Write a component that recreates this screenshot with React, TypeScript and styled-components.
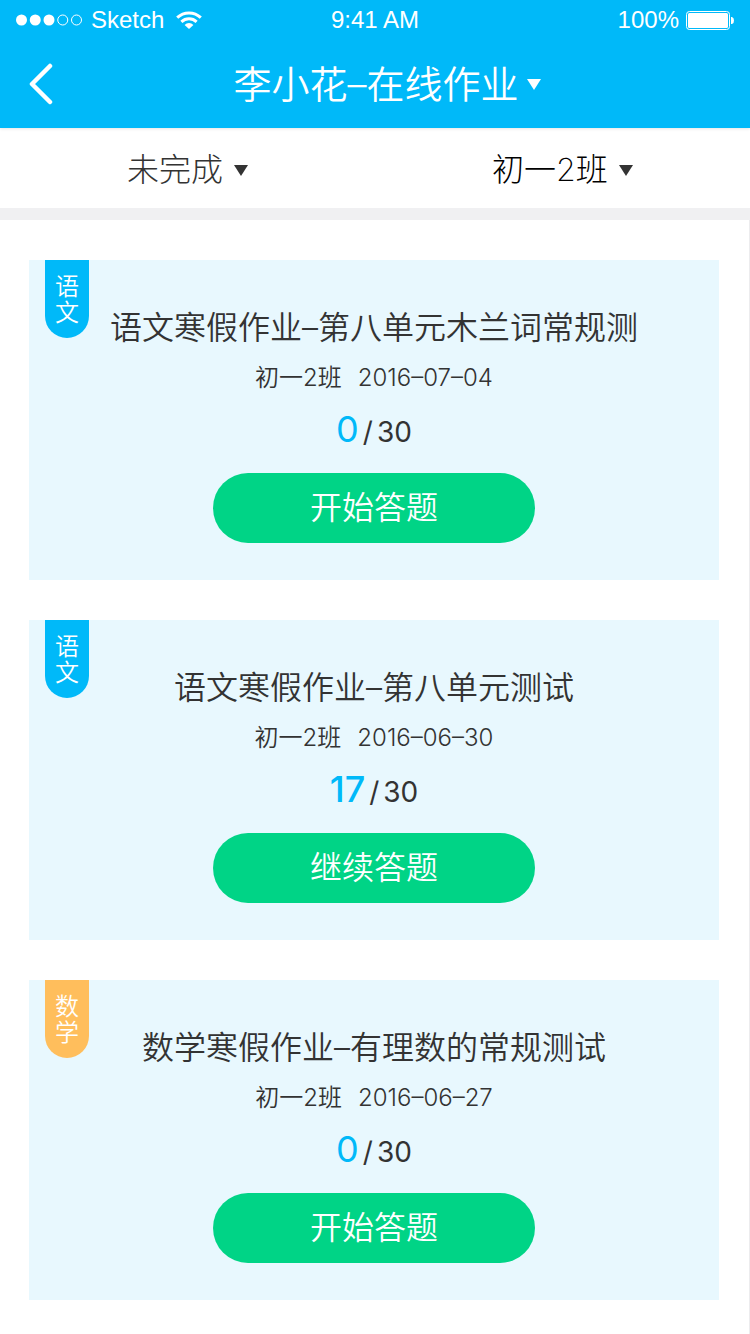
import React from "react";
import styled, { createGlobalStyle } from "styled-components";

const BLUE = "#00b9f9";
const INK = "#333333";
const CJK = `"Noto Sans CJK SC", sans-serif`;

const GlobalStyle = createGlobalStyle`
  *, *::before, *::after { box-sizing: border-box; }
  html, body, #root { min-height: 100vh; }
  body {
    margin: 0;
    background: #ffffff;
    color: ${INK};
    font-family: Inter, ${CJK};
    font-weight: 350;
  }
  #root { display: flex; flex-direction: column; }
  button, select { font: inherit; color: inherit; border: 0; padding: 0; margin: 0; background: none; cursor: pointer; }
  h1, h2, p { margin: 0; font-weight: inherit; }
`;

const TopBar = styled.header`
  background: ${BLUE};
  color: #ffffff;
  box-shadow: 0 1px 3px rgba(0, 0, 0, 0.1);
`;

const StatusBar = styled.div`
  display: grid;
  grid-template-columns: 1fr auto 1fr;
  align-items: center;
  height: 40px;
  padding: 0 16px;
  font: 400 24px/40px "Liberation Sans", Arial, sans-serif;
`;

const StatusGroup = styled.div<{ $end?: boolean }>`
  display: flex;
  align-items: center;
  justify-content: ${(p) => (p.$end ? "flex-end" : "flex-start")};
  gap: 7px;
`;

const Carrier = styled.span`
  padding-right: 5px;
`;

const NavBar = styled.div`
  display: grid;
  grid-template-columns: 1fr auto 1fr;
  align-items: center;
  height: 88px;
`;

const BackButton = styled.button`
  display: flex;
  align-items: center;
  justify-self: start;
  height: 88px;
  padding: 0 28px;
`;

const TitleButton = styled.button`
  display: flex;
  align-items: center;
  gap: 8px;
  padding-left: 24px;
  font-size: 38px;
  line-height: 56px;
`;

const FilterBar = styled.nav`
  display: flex;
  height: 92px;
  padding-top: 4px;
  border-bottom: 12px solid #f0f0f2;
`;

const Filter = styled.label<{ $color: string }>`
  flex: 1;
  display: flex;
  align-items: center;
  justify-content: center;
  gap: 11px;
  color: ${(p) => p.$color};
`;

const FilterSelect = styled.select`
  appearance: none;
  field-sizing: content;
  font-size: 32px;
  font-weight: 200;
  line-height: 48px;
`;

const HomeworkList = styled.main`
  flex: 1;
  display: flex;
  flex-direction: column;
  gap: 40px;
  padding: 40px 30px 34px 29px;
  border-right: 1px solid #ececee;
`;

const Card = styled.article`
  position: relative;
  display: flex;
  flex-direction: column;
  align-items: center;
  padding: 44px 16px 37px;
  background: #e8f8fe;
`;

const SubjectTag = styled.span<{ $color: string }>`
  position: absolute;
  top: 0;
  left: 16px;
  width: 44px;
  height: 78px;
  padding: 14px 10px;
  border-radius: 0 0 22px 22px;
  background: ${(p) => p.$color};
  color: #ffffff;
  font-size: 24px;
  line-height: 26px;
`;

const CardTitle = styled.h2`
  font-size: 32px;
  line-height: 48px;
  text-align: center;
`;

const Meta = styled.p`
  display: flex;
  gap: 16px;
  margin-top: 8px;
  font-size: 24px;
  line-height: 36px;
`;

const Progress = styled.p`
  display: flex;
  align-items: baseline;
  gap: 4px;
  margin: 12px 0 17px;
  font-size: 28px;
  font-weight: 400;
  line-height: 48px;
`;

const Done = styled.span<{ $started: boolean }>`
  color: ${BLUE};
  font-size: 36px;
  font-weight: ${(p) => (p.$started ? 500 : 400)};
  line-height: 40px;
`;

const AnswerButton = styled.button`
  width: 322px;
  max-width: 100%;
  height: 70px;
  border-radius: 35px;
  background: #00d486;
  color: #ffffff;
  font-size: 32px;
  line-height: 48px;
`;

const Caret = ({ color }: { color: string }) => (
  <svg width="14" height="11" viewBox="0 0 14 11" aria-hidden="true">
    <path d="M0 0H14L7 11Z" fill={color} />
  </svg>
);

const Signal = () => (
  <svg width="68" height="12" viewBox="0 0 68 12" aria-hidden="true">
    {[5.5, 19.25, 33].map((x) => (
      <circle key={x} cx={x} cy="6" r="5.5" fill="#fff" />
    ))}
    {[46.75, 60.5].map((x) => (
      <circle key={x} cx={x} cy="6" r="5" fill="none" stroke="#fff" />
    ))}
  </svg>
);

const Wifi = () => (
  <svg width="26" height="18" viewBox="0 0 26 18" aria-hidden="true">
    <g fill="none" stroke="#fff" strokeWidth="3">
      <path d="M1.2 6.7A17 17 0 0 1 24.8 6.7" />
      <path d="M5.4 10.9A11 11 0 0 1 20.6 10.9" />
    </g>
    <path d="M8.6 13.9A6.2 6.2 0 0 1 17.4 13.9L13 18Z" fill="#fff" />
  </svg>
);

const Battery = () => (
  <svg width="48" height="19" viewBox="0 0 48 19" aria-hidden="true">
    <rect x="0.5" y="0.5" width="43" height="18" rx="3" fill="none" stroke="#fff" />
    <rect x="2" y="2" width="40" height="15" rx="1.5" fill="#fff" />
    <path d="M45 6H46Q48 6.5 48 9.5T46 13H45Z" fill="#fff" />
  </svg>
);

const homework = [
  { subject: "语文", tag: BLUE, title: "语文寒假作业–第八单元木兰词常规测", date: "2016–07–04", done: 0, action: "开始答题" },
  { subject: "语文", tag: BLUE, title: "语文寒假作业–第八单元测试", date: "2016–06–30", done: 17, action: "继续答题" },
  { subject: "数学", tag: "#ffbe5c", title: "数学寒假作业–有理数的常规测试", date: "2016–06–27", done: 0, action: "开始答题" },
];

export default function App() {
  return (
    <>
      <GlobalStyle />
      <TopBar>
        <StatusBar>
          <StatusGroup>
            <Signal />
            <Carrier>Sketch</Carrier>
            <Wifi />
          </StatusGroup>
          <span>9:41 AM</span>
          <StatusGroup $end>
            <span>100%</span>
            <Battery />
          </StatusGroup>
        </StatusBar>
        <NavBar>
          <BackButton type="button" aria-label="返回">
            <svg width="26" height="42" viewBox="0 0 26 42" fill="none" aria-hidden="true">
              <path d="M22 3L4 21L22 39" stroke="#fff" strokeWidth="4.5" strokeLinecap="round" strokeLinejoin="round" />
            </svg>
          </BackButton>
          <h1>
            <TitleButton type="button" aria-haspopup="menu">
              李小花–在线作业
              <Caret color="#ffffff" />
            </TitleButton>
          </h1>
        </NavBar>
      </TopBar>
      <FilterBar>
        <Filter $color={INK}>
          <FilterSelect aria-label="状态">
            <option>未完成</option>
          </FilterSelect>
          <Caret color={INK} />
        </Filter>
        <Filter $color="#000000">
          <FilterSelect aria-label="班级">
            <option>初一2班</option>
          </FilterSelect>
          <Caret color={INK} />
        </Filter>
      </FilterBar>
      <HomeworkList>
        {homework.map((item) => (
          <Card key={item.date}>
            <SubjectTag $color={item.tag}>{item.subject}</SubjectTag>
            <CardTitle>{item.title}</CardTitle>
            <Meta>
              <span>初一2班</span>
              <time>{item.date}</time>
            </Meta>
            <Progress>
              <Done $started={item.done > 0}>{item.done}</Done>
              <span>/</span>
              <span>30</span>
            </Progress>
            <AnswerButton type="button">{item.action}</AnswerButton>
          </Card>
        ))}
      </HomeworkList>
    </>
  );
}
